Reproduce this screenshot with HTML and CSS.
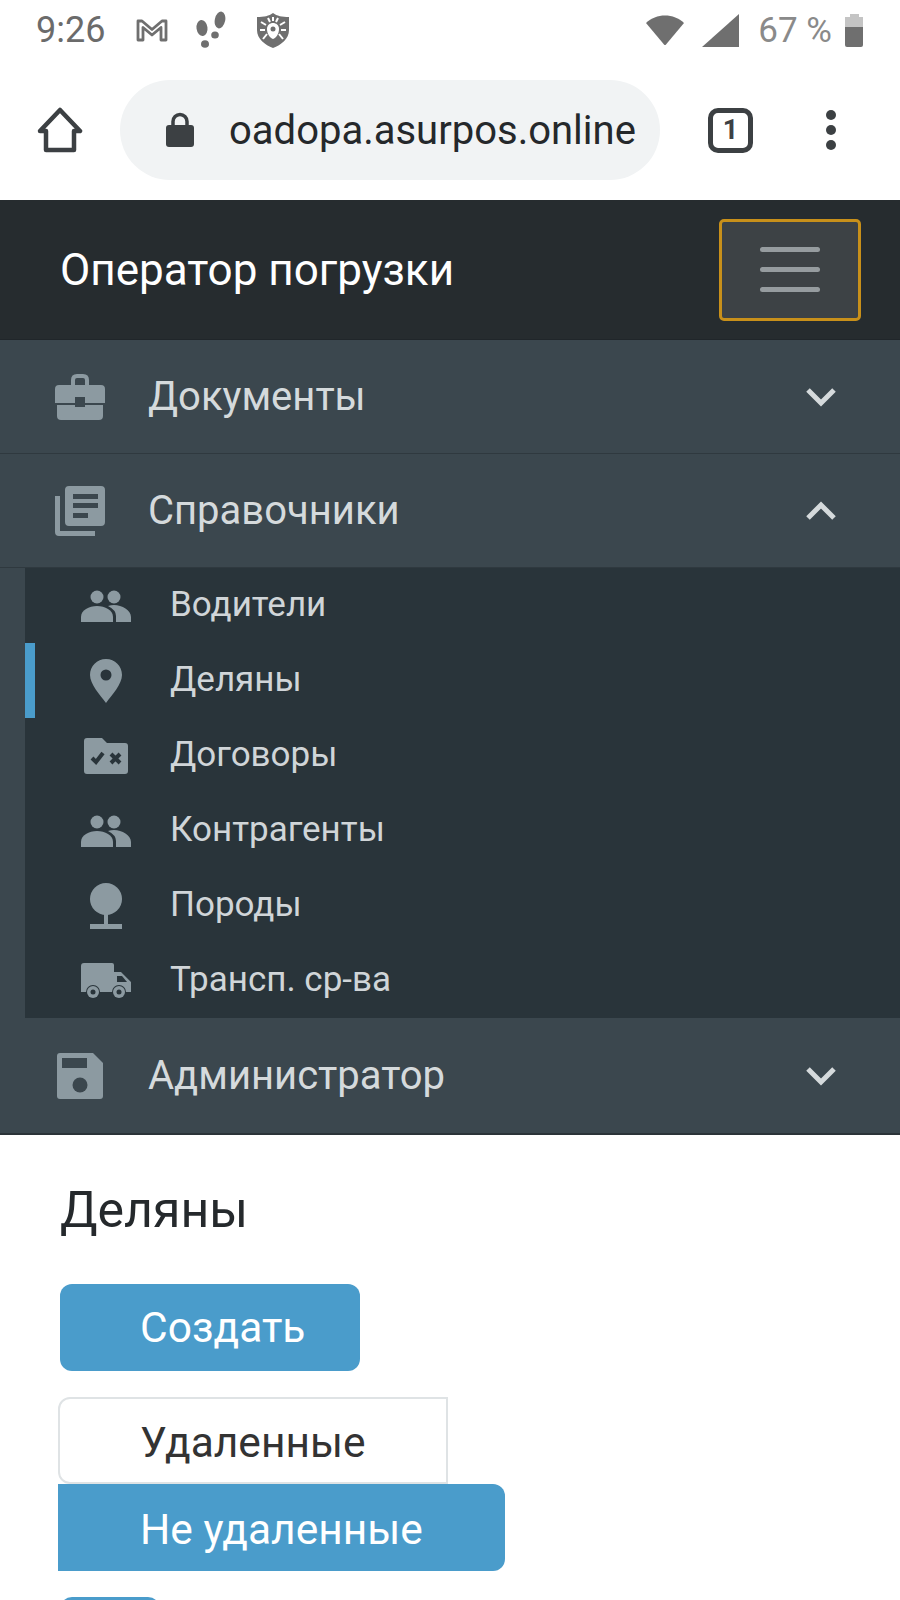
FILE: index.html
```html
<!DOCTYPE html>
<html lang="ru">
<head>
  <meta charset="UTF-8">
  <title>Деляны</title>
  <link rel="stylesheet" href="styles.css">
</head>
<body>

  <div class="status-bar">
    <span class="time">9:26</span>
    <svg class="st-gmail" width="32" height="24" viewBox="0 0 32 24"><path d="M2 22V3H6L16 11.500 26 3H30V22H25V9.500L16 17 7 9.500V22Z" fill="none" stroke="#6f6f6f" stroke-width="2.800" stroke-linejoin="round"/></svg>
    <svg class="st-steps" width="32" height="38" viewBox="0 0 32 38" fill="#6f6f6f">
      <ellipse cx="7" cy="17" rx="5.500" ry="8" transform="rotate(-8 7 17)"/>
      <ellipse cx="10" cy="33" rx="4" ry="3.800"/>
      <ellipse cx="25" cy="9" rx="5.200" ry="8.500" transform="rotate(12 25 9)"/>
      <ellipse cx="20" cy="24" rx="3.800" ry="3.500"/>
    </svg>
    <svg class="st-shield" width="32" height="35" viewBox="0 0 32 35">
      <path d="M16 0C20 3 25 4 32 4V17C32 26 24 32 16 35 8 32 0 26 0 17V4C7 4 12 3 16 0Z" fill="#6f6f6f"/>
      <path d="M10 16C10 12 13 10 16 10S22 12 22 16C22 21 19 25 16 26 13 25 10 21 10 16Z" fill="#fff"/>
      <circle cx="16" cy="16" r="2.500" fill="#6f6f6f"/>
      <path d="M16 4V8M11 5 13 9M21 5 19 9M4 9 9 12M28 9 23 12M3 17H8M29 17H24M6 26 10 21M26 26 22 21" stroke="#fff" stroke-width="2" fill="none"/>
    </svg>
    <span class="status-gap"></span>
    <svg class="st-wifi" width="40" height="32" viewBox="0 0 40 32"><path d="M1 9C11-1 29-1 39 9L21 30.500Q20 31.500 19 30.500Z" fill="#6f6f6f"/></svg>
    <svg class="st-signal" width="37" height="33" viewBox="0 0 37 33"><path d="M37 0V33H0Z" fill="#6f6f6f"/></svg>
    <span class="battery-text">67 %</span>
    <div class="battery"><div class="battery-cap"></div><div class="battery-top"></div><div class="battery-fill"></div></div>
  </div>

  <div class="toolbar">
    <svg class="home-icon" width="46" height="46" viewBox="0 0 46 46"><path d="M3 24 23 3 43 24H37V43H9V24Z" fill="none" stroke="#3c4043" stroke-width="4.500" stroke-linejoin="round"/></svg>
    <div class="url-pill">
      <svg class="lock-icon" width="28" height="36" viewBox="0 0 28 36"><path d="M7 15V9.500A7 7 0 0 1 21 9.500V15" fill="none" stroke="#3c4043" stroke-width="3.500"/><rect y="13" width="28" height="22" rx="3" fill="#3c4043"/></svg>
      <span class="url-text">oadopa.asurpos.online</span>
    </div>
    <div class="tab-count">1</div>
    <div class="menu-dots"><span></span><span></span><span></span></div>
  </div>

  <header class="navbar">
    <span class="brand">Оператор погрузки</span>
    <button class="toggler"><span></span><span></span><span></span></button>
  </header>

  <nav class="side-menu">
    <div class="menu-item">
      <svg class="menu-icon" width="50" height="46" viewBox="0 0 50 46" fill="#8c9aa1">
        <path d="M18 12V6Q18 2 22 2H28Q32 2 32 6V12" fill="none" stroke="#8c9aa1" stroke-width="4"/>
        <path d="M4 11H46Q50 11 50 15V29H30V23H20V29H0V15Q0 11 4 11Z"/>
        <path d="M2 31H20V33H30V31H48V42Q48 46 44 46H6Q2 46 2 42Z"/>
      </svg>
      <span class="menu-label">Документы</span>
      <svg class="chevron" width="32" height="20" viewBox="0 0 32 20"><path d="M3 3 16 16 29 3" fill="none" stroke="#d5dadc" stroke-width="5"/></svg>
    </div>

    <div class="menu-item">
      <svg class="menu-icon" width="50" height="50" viewBox="0 0 50 50" fill="#8c9aa1">
        <path d="M0 10H5V45H40V50H4Q0 50 0 46Z"/>
        <path fill-rule="evenodd" d="M14 0H46Q50 0 50 4V36Q50 40 46 40H14Q10 40 10 36V4Q10 0 14 0ZM18 8V13H43V8ZM18 17V22H43V17ZM18 27V32H33V27Z"/>
      </svg>
      <span class="menu-label">Справочники</span>
      <svg class="chevron" width="32" height="20" viewBox="0 0 32 20"><path d="M3 17 16 4 29 17" fill="none" stroke="#d5dadc" stroke-width="5"/></svg>
    </div>

    <div class="submenu">
      <div class="sub-item">
        <svg class="sub-icon" width="50" height="32" viewBox="0 0 50 32" fill="#8c9aa1">
          <circle cx="16" cy="7" r="6.500"/><circle cx="33" cy="7" r="6.500"/>
          <path d="M0 32V27C0 20 8 16 16 16S32 20 32 27V32Z"/>
          <path d="M27 16Q30 15 33 15C41 15 50 20 50 27V32H35V26Q35 20 27 16Z"/>
        </svg>
        <span class="sub-label">Водители</span>
      </div>
      <div class="sub-item active">
        <svg class="sub-icon" width="32" height="44" viewBox="0 0 32 44">
          <path fill="#8c9aa1" fill-rule="evenodd" d="M16 0C25 0 32 7 32 16 32 25 22 36 16 44 10 36 0 25 0 16 0 7 7 0 16 0ZM16 10.500A5.500 5.500 0 1 0 16 21.500 5.500 5.500 0 1 0 16 10.500Z"/>
        </svg>
        <span class="sub-label">Деляны</span>
      </div>
      <div class="sub-item">
        <svg class="sub-icon" width="44" height="36" viewBox="0 0 44 36">
          <path fill="#8c9aa1" d="M3 0H18L23 5H41Q44 5 44 8V33Q44 36 41 36H3Q0 36 0 33V3Q0 0 3 0Z"/>
          <path d="M8 20 12 24 19 15M27 16 36 25M36 16 27 25" fill="none" stroke="#29343a" stroke-width="4"/>
        </svg>
        <span class="sub-label">Договоры</span>
      </div>
      <div class="sub-item">
        <svg class="sub-icon" width="50" height="32" viewBox="0 0 50 32" fill="#8c9aa1">
          <circle cx="16" cy="7" r="6.500"/><circle cx="33" cy="7" r="6.500"/>
          <path d="M0 32V27C0 20 8 16 16 16S32 20 32 27V32Z"/>
          <path d="M27 16Q30 15 33 15C41 15 50 20 50 27V32H35V26Q35 20 27 16Z"/>
        </svg>
        <span class="sub-label">Контрагенты</span>
      </div>
      <div class="sub-item">
        <svg class="sub-icon" width="32" height="46" viewBox="0 0 32 46" fill="#8c9aa1">
          <circle cx="16" cy="16" r="16"/>
          <rect x="14" y="30" width="4" height="12"/>
          <rect y="41" width="32" height="5"/>
        </svg>
        <span class="sub-label">Породы</span>
      </div>
      <div class="sub-item">
        <svg class="sub-icon" width="50" height="36" viewBox="0 0 50 36">
          <path fill="#8c9aa1" d="M3 0H31Q33 0 33 2V9H40L50 19V29H0V3Q0 0 3 0Z"/>
          <path fill="#29343a" d="M36 13V19H46L41 13Z"/>
          <circle cx="12" cy="29" r="7" fill="#29343a"/>
          <circle cx="38" cy="29" r="7" fill="#29343a"/>
          <circle cx="12" cy="29" r="6" fill="#8c9aa1"/>
          <circle cx="38" cy="29" r="6" fill="#8c9aa1"/>
          <circle cx="12" cy="29" r="2.500" fill="#29343a"/>
          <circle cx="38" cy="29" r="2.500" fill="#29343a"/>
        </svg>
        <span class="sub-label">Трансп. ср-ва</span>
      </div>
    </div>

    <div class="menu-item last">
      <svg class="menu-icon" width="46" height="46" viewBox="0 0 46 46">
        <path fill="#8c9aa1" d="M3 0H36L46 10V43Q46 46 43 46H3Q0 46 0 43V3Q0 0 3 0Z"/>
        <rect x="5" y="5" width="25" height="10" fill="#3b474e"/>
        <circle cx="23" cy="32" r="7.500" fill="#3b474e"/>
      </svg>
      <span class="menu-label">Администратор</span>
      <svg class="chevron" width="32" height="20" viewBox="0 0 32 20"><path d="M3 3 16 16 29 3" fill="none" stroke="#d5dadc" stroke-width="5"/></svg>
    </div>
  </nav>

  <main class="content">
    <h2 class="page-title">Деляны</h2>
    <button class="btn btn-primary btn-create">Создать</button>
    <div class="filter-group">
      <button class="btn btn-outline">Удаленные</button>
      <button class="btn btn-primary btn-joined">Не удаленные</button>
    </div>
    <button class="btn btn-primary btn-next"></button>
  </main>

</body>
</html>
```

FILE: styles.css
```css
html {
  height: 1600px;
  overflow: hidden;
}

body {
  margin: 0;
  height: 1600px;
  overflow: hidden;
  font-family: Roboto, sans-serif;
  background: #fff;
  color: #2b2f32;
}

svg {
  display: block;
  flex: none;
}

/* status bar */
.status-bar {
  display: flex;
  align-items: center;
  height: 60px;
  padding: 0 37px 0 36px;
}

.time {
  font-size: 36px;
  color: #6b6b6b;
  width: 100px;
}

.st-gmail {
  margin-right: 27px;
}

.st-steps {
  margin-right: 30px;
}

.status-gap {
  flex: 1;
}

.st-signal {
  margin-left: 16px;
}

.st-wifi {
  margin-right: 1px;
}

.battery-text {
  font-size: 35px;
  color: #8a8a8a;
  margin-left: 19px;
  margin-right: 13px;
}

.battery {
  width: 18px;
  height: 33px;
  display: flex;
  flex-direction: column;
  align-items: center;
}

.battery-cap {
  width: 9px;
  height: 3px;
  background: #c4c4c4;
}

.battery-top {
  width: 18px;
  height: 10px;
  background: #c4c4c4;
}

.battery-fill {
  width: 18px;
  flex: 1;
  background: #6f6f6f;
  border-radius: 0 0 2px 2px;
}

/* browser toolbar */
.toolbar {
  display: flex;
  align-items: center;
  height: 140px;
  padding-left: 37px;
}

.url-pill {
  display: flex;
  align-items: center;
  width: 540px;
  height: 100px;
  margin-left: 37px;
  border-radius: 50px;
  background: #f1f3f4;
  box-sizing: border-box;
  padding-left: 46px;
}

.url-text {
  font-size: 40px;
  color: #25282b;
  margin-left: 35px;
  white-space: nowrap;
}

.tab-count {
  width: 45px;
  height: 45px;
  box-sizing: border-box;
  margin-left: 48px;
  border: 5px solid #3c4043;
  border-radius: 10px;
  font-size: 27px;
  font-weight: 700;
  color: #3c4043;
  text-align: center;
  line-height: 35px;
}

.menu-dots {
  display: flex;
  flex-direction: column;
  gap: 5px;
  margin-left: 73px;
}

.menu-dots span {
  width: 10px;
  height: 10px;
  border-radius: 50%;
  background: #3c4043;
}

/* navbar */
.navbar {
  display: flex;
  align-items: center;
  justify-content: space-between;
  height: 140px;
  padding: 0 39px 0 60px;
  background: #262c2f;
  border-bottom: 1px solid #20262a;
  box-sizing: border-box;
}

.brand {
  font-size: 44px;
  color: #fff;
}

.toggler {
  display: flex;
  flex-direction: column;
  align-items: center;
  justify-content: center;
  gap: 15px;
  width: 142px;
  height: 102px;
  padding: 0;
  background: #3d4245;
  border: 3px solid #c8901a;
  border-radius: 5px;
}

.toggler span {
  width: 60px;
  height: 5px;
  border-radius: 3px;
  background: #969c9f;
}

/* side menu */
.side-menu {
  background: #3b474e;
}

.menu-item {
  display: flex;
  align-items: center;
  height: 114px;
  padding: 0 63px 0 55px;
  border-bottom: 1px solid #2f393f;
  box-sizing: border-box;
}

.menu-item.last {
  height: 117px;
  border-bottom: 2px solid #2b3338;
}

.menu-label {
  flex: 1;
  font-size: 40px;
  color: #d5dadc;
  margin-left: 43px;
}

.menu-item.last .menu-icon {
  margin-left: 2px;
  margin-right: 2px;
}

.submenu {
  margin-left: 25px;
  background: #29343a;
}

.sub-item {
  display: grid;
  grid-template-columns: 50px 1fr;
  column-gap: 39px;
  align-items: center;
  justify-items: center;
  height: 75px;
  padding-left: 46px;
  border-left: 10px solid transparent;
}

.sub-item.active {
  border-left-color: #4a9ccb;
}

.sub-label {
  justify-self: start;
  font-size: 35px;
  padding-bottom: 2px;
  color: #d0d5d8;
}

/* page content */
.content {
  padding: 47px 0 0 60px;
}

.page-title {
  margin: 0 0 46px;
  font-size: 50px;
  font-weight: 400;
  line-height: 56px;
  color: #25292c;
}

.btn {
  display: block;
  height: 87px;
  padding: 0 0 0 80px;
  box-sizing: border-box;
  font-family: Roboto, sans-serif;
  font-size: 42.500px;
  text-align: left;
  border-radius: 12px;
  border: none;
}

.btn-primary {
  background: #4a9ccb;
  color: #fff;
}

.btn-create {
  width: 300px;
}

.filter-group {
  margin: 26px 0 26px -2px;
}

.btn-outline {
  width: 390px;
  background: #fff;
  color: #333;
  border: 2px solid #dfe3e5;
  border-radius: 12px 0 0 12px;
  padding: 4px 0 0 80px;
}

.btn-joined {
  width: 447px;
  padding: 4px 0 0 82px;
  border-radius: 0 12px 12px 0;
}

.btn-next {
  width: 100px;
}
```
